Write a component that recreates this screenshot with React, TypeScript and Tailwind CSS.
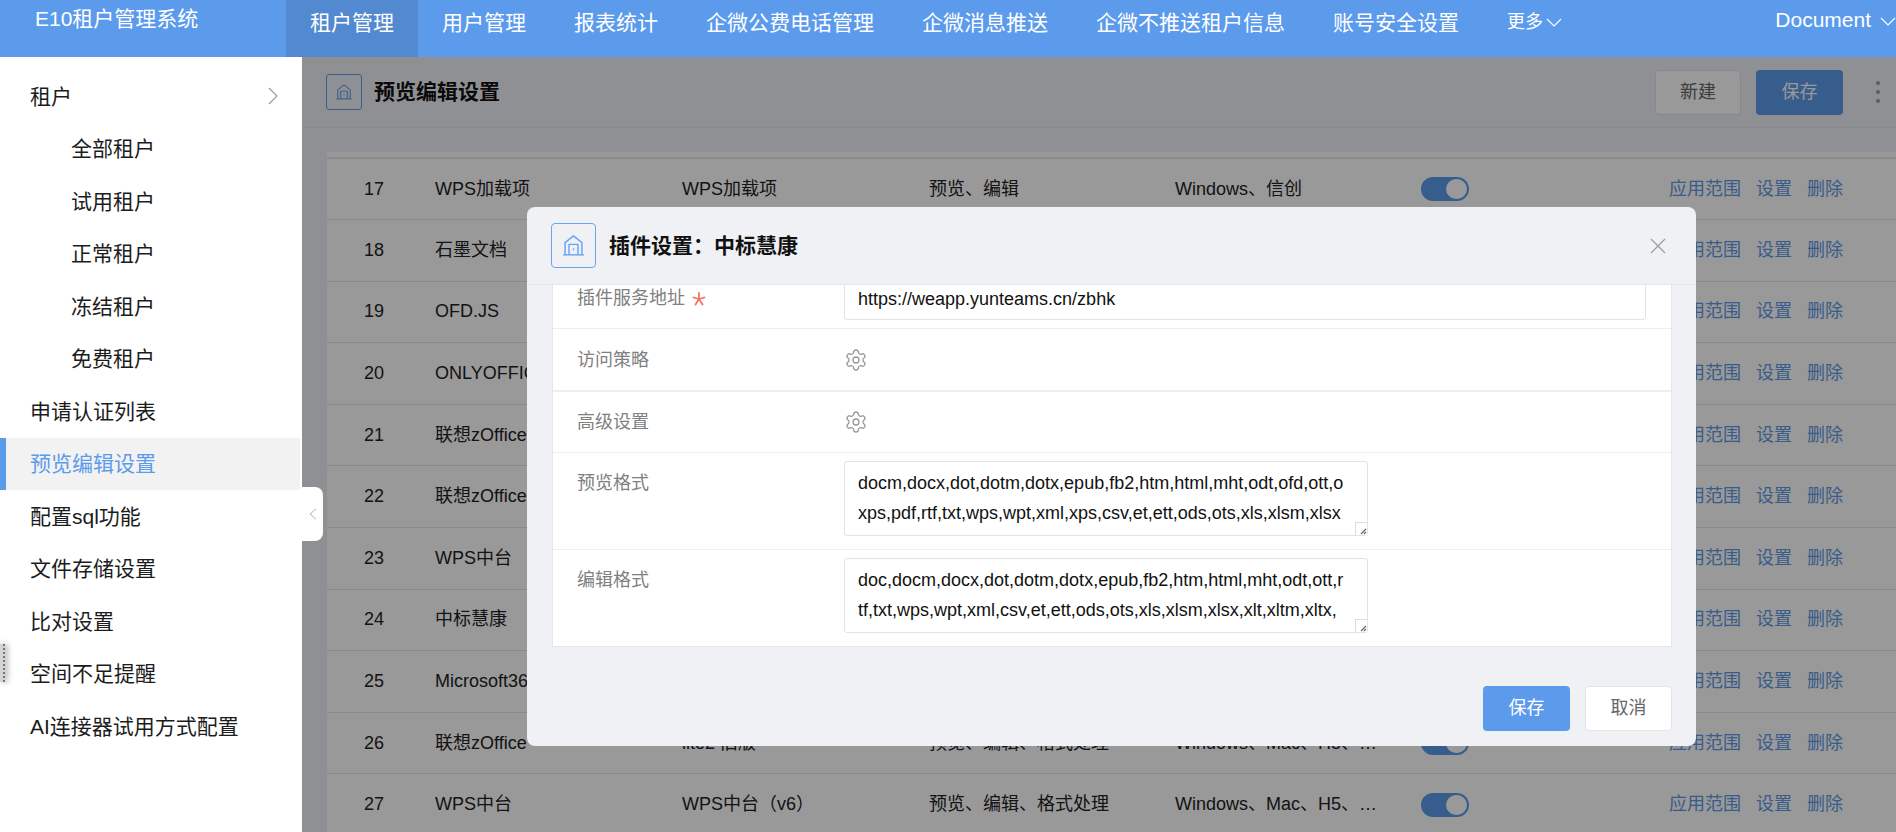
import React from "react";
import { Settings } from "lucide-react";

const navItems = ["租户管理", "用户管理", "报表统计", "企微公费电话管理", "企微消息推送", "企微不推送租户信息", "账号安全设置"];
const subItems = ["全部租户", "试用租户", "正常租户", "冻结租户", "免费租户"];
const topItems = ["申请认证列表", "预览编辑设置", "配置sql功能", "文件存储设置", "比对设置", "空间不足提醒", "AI连接器试用方式配置"];

const rows: [string, string, string, string, string][] = [
  ["18", "石墨文档", "石墨文档", "预览、编辑", "Windows、Mac、H5"],
  ["19", "OFD.JS", "OFD.JS", "预览", "Windows、信创"],
  ["20", "ONLYOFFICE", "ONLYOFFICE", "预览、编辑", "Windows、Mac、H5"],
  ["21", "联想zOffice", "联想zOffice", "预览、编辑", "Windows、Mac、H5"],
  ["22", "联想zOffice", "联想zOffice", "预览、编辑", "Windows、Mac、H5"],
  ["23", "WPS中台", "WPS中台", "预览、编辑", "Windows、Mac、H5"],
  ["24", "中标慧康", "中标慧康", "预览、编辑", "Windows、信创"],
  ["25", "Microsoft365", "Microsoft365", "预览、编辑", "Windows、Mac、H5"],
  ["26", "联想zOffice", "lite2 旧版", "预览、编辑、格式处理", "Windows、Mac、H5、…"],
  ["27", "WPS中台", "WPS中台（v6）", "预览、编辑、格式处理", "Windows、Mac、H5、…"],
];

function HouseIcon({ className }: { className: string }) {
  return (
    <svg viewBox="0 0 24 24" fill="none" stroke="currentColor" strokeWidth="1.3" strokeLinejoin="round" className={className}>
      <path d="M4.5 20V9.5L12 3.5l7.5 6V20" />
      <path d="M8 20v-9h8v9" />
      <path d="M2.8 20.3h18.4" />
      <path d="M12 14.5v1.8" />
    </svg>
  );
}

function Chevron({ dir, className }: { dir: "down" | "right" | "left"; className: string }) {
  const d = dir === "down" ? "M1 1l7 7 7-7" : dir === "right" ? "M1 1l8 8-8 8" : "M8 1 1 7l7 6";
  const vb = dir === "down" ? "0 0 16 9" : dir === "right" ? "0 0 10 18" : "0 0 9 14";
  return (
    <svg viewBox={vb} fill="none" stroke="currentColor" strokeWidth="1.1" className={className}>
      <path d={d} />
    </svg>
  );
}

function Toggle() {
  return (
    <div className="flex h-[24px] w-[48px] items-center justify-end rounded-full bg-[#5c9bec] pr-[2px]">
      <div className="h-[20px] w-[21px] rounded-full bg-white" />
    </div>
  );
}

function Row({ cells, className }: { cells: [string, string, string, string, string]; className: string }) {
  return (
    <div className={`grid grid-cols-[71px_247px_247px_246px_246px_248px_1fr] items-center border-b border-[#e4e4e4] pl-[37px] text-[18px] text-[#222] ${className}`}>
      <div>{cells[0]}</div>
      <div className="whitespace-nowrap">{cells[1]}</div>
      <div className="whitespace-nowrap">{cells[2]}</div>
      <div className="whitespace-nowrap">{cells[3]}</div>
      <div className="whitespace-nowrap">{cells[4]}</div>
      <div><Toggle /></div>
      <div className="flex gap-[15px] text-[#6199e6]">
        <span>应用范围</span>
        <span>设置</span>
        <span>删除</span>
      </div>
    </div>
  );
}

function Grip() {
  return (
    <div className="absolute bottom-[1px] right-[1px] flex h-[13px] w-[12px] items-end justify-end border-l border-t border-[#dcdcdc] bg-white">
      <svg viewBox="0 0 8 8" className="h-[8px] w-[8px]" stroke="#666" strokeWidth="1.2">
        <path d="M7 2 2 7M7 5 5 7" />
      </svg>
    </div>
  );
}

function FormatField({ value }: { value: string }) {
  return (
    <div className="relative h-[75px] w-[524px]">
      <textarea
        readOnly
        value={value}
        className="h-full w-full resize-none overflow-hidden break-all rounded-[3px] border border-[#e3e3e3] bg-white pb-0 pl-[13px] pr-[22px] pt-[6px] text-[18px] leading-[30px] text-[#111] outline-none"
      />
      <Grip />
    </div>
  );
}

export default function App() {
  return (
    <div lang="zh-CN" className="relative flex h-[832px] w-[1896px] flex-col overflow-hidden bg-white [font-family:Liberation_Sans,Noto_Sans_CJK_SC,sans-serif]">
      {/* top bar */}
      <header className="flex h-[57px] shrink-0 bg-[#5c9bec] text-white">
        <div className="w-[286px] shrink-0 pl-[35px] pt-[6px] text-[21px] leading-[26px]">E10租户管理系统</div>
        <nav className="flex h-full">
          {navItems.map((n, i) => (
            <div key={n} className={`flex h-full items-start whitespace-nowrap px-[24px] pt-[10px] text-[21px] leading-[26px] ${i === 0 ? "bg-[#5289d0]" : ""}`}>
              {n}
            </div>
          ))}
        </nav>
        <div className="ml-[24px] flex items-start pt-[9px] text-[18px] leading-[26px]">
          更多
          <Chevron dir="down" className="ml-[3px] mt-[9px] h-[9px] w-[16px]" />
        </div>
        <div className="ml-auto flex items-start pt-[7px] text-[21px] leading-[26px]">
          Document
          <Chevron dir="down" className="ml-[9px] mt-[10px] h-[9px] w-[16px]" />
        </div>
      </header>

      <div className="flex min-h-0 flex-1">
        {/* sidebar */}
        <aside className="w-[302px] shrink-0 bg-white pr-[2px] pt-[13px] text-[21px] text-[#1c1c1c]">
          <div className="flex h-[52.5px] items-center justify-between pl-[30px] pr-[22px]">
            <span>租户</span>
            <Chevron dir="right" className="h-[18px] w-[10px] text-[#9a9a9a]" />
          </div>
          {subItems.map((s) => (
            <div key={s} className="flex h-[52.5px] items-center pl-[71px]">{s}</div>
          ))}
          {topItems.map((s) => {
            const active = s === "预览编辑设置";
            return (
              <div
                key={s}
                className={`flex h-[52.5px] items-center ${active ? "border-l-[6px] border-[#5c9bec] bg-[#f2f2f2] pl-[24px] text-[#5c9bec]" : "pl-[30px]"}`}
              >
                {s}
              </div>
            );
          })}
        </aside>

        {/* main */}
        <main className="relative min-w-0 flex-1 overflow-hidden bg-[#eff1f5]">
          <div className="flex h-[71px] items-center border-b border-[#e6e7ea] pl-[24px] pr-[16px]">
            <div className="flex h-[36px] w-[36px] items-center justify-center rounded-[3px] border border-[#5c9bec] text-[#5c9bec]">
              <HouseIcon className="h-[20px] w-[20px]" />
            </div>
            <div className="ml-[12px] text-[21px] font-bold text-[#111]">预览编辑设置</div>
            <div className="ml-auto flex h-[45px] w-[86px] items-center justify-center rounded-[4px] border border-[#e3e3e3] bg-white text-[18px] text-[#666]">新建</div>
            <div className="ml-[15px] flex h-[45px] w-[87px] items-center justify-center rounded-[4px] bg-[#5c9bec] text-[18px] text-white">保存</div>
            <div className="ml-[33px] flex w-[4px] flex-col gap-[5px]">
              <span className="h-[4px] w-[4px] rounded-full bg-[#9a9a9a]" />
              <span className="h-[4px] w-[4px] rounded-full bg-[#9a9a9a]" />
              <span className="h-[4px] w-[4px] rounded-full bg-[#9a9a9a]" />
            </div>
          </div>

          <div className="ml-[25px] mt-[24px] bg-white">
            <div className="h-[5px]" />
            <div className="h-[2px] bg-[#e8e8e8]" />
            <Row cells={["17", "WPS加载项", "WPS加载项", "预览、编辑", "Windows、信创"]} className="h-[61px]" />
            {rows.map((r) => (
              <Row key={r[0]} cells={r} className="h-[61.6px]" />
            ))}
          </div>

          {/* backdrop */}
          <div className="absolute inset-0 bg-black/40" />
        </main>
      </div>

      {/* collapse handle */}
      <div className="absolute left-[302px] top-[487px] flex h-[54px] w-[21px] items-center justify-center rounded-r-[8px] bg-white">
        <Chevron dir="left" className="h-[12px] w-[8px] text-[#aaa]" />
      </div>

      {/* stray edge widget */}
      <div className="absolute left-0 top-[644px] h-[38px] w-[5px] border-r-2 border-dotted border-[#777] bg-[#d4d4d4] shadow-[2px_0_6px_rgba(0,0,0,0.35)]" />

      {/* modal */}
      <div className="absolute left-[527px] top-[207px] flex h-[539px] w-[1169px] flex-col rounded-[8px] bg-[#eff1f5]">
        <div className="flex h-[78px] shrink-0 items-center border-b border-[#e4e6ea] pl-[24px] pr-[30px]">
          <div className="flex h-[45px] w-[45px] items-center justify-center rounded-[4px] border border-[#6aa5f5] text-[#6aa5f5]">
            <HouseIcon className="h-[27px] w-[27px]" />
          </div>
          <div className="ml-[13px] text-[21px] font-bold text-[#111]">插件设置：中标慧康</div>
          <svg viewBox="0 0 16 16" fill="none" stroke="#999" strokeWidth="1.1" className="ml-auto h-[16px] w-[16px]">
            <path d="M1 1l14 14M15 1 1 15" />
          </svg>
        </div>

        <div className="ml-[25px] w-[1120px] border-x border-b border-[#e4e6ea] bg-white text-[18px] text-[#808080]">
          <div className="flex h-[44px] items-end overflow-hidden border-b border-[#eeeeee] pb-[8px] pl-[24px] pr-[25px]">
            <div className="flex h-[40px] w-[267px] shrink-0 items-center pb-[3px]">
              插件服务地址
              <svg viewBox="0 0 14 14" className="ml-[7px] h-[14px] w-[14px]" stroke="#f4735c" strokeWidth="1.8" strokeLinecap="round">
                <path d="M7 1v6M7 7 1.5 5.5M7 7l5.5-1.5M7 7 3.5 12.5M7 7l3.5 5.5" />
              </svg>
            </div>
            <div className="flex h-[40px] flex-1 items-center rounded-[3px] border border-[#e3e3e3] bg-white pb-[1px] pl-[13px] text-[18px] text-[#111]">
              https://weapp.yunteams.cn/zbhk
            </div>
          </div>
          <div className="flex h-[63px] items-center border-b-2 border-[#eeeeee] pl-[24px]">
            <div className="w-[267px] shrink-0 pt-[1px]">访问策略</div>
            <Settings className="h-[24px] w-[24px] text-[#999]" strokeWidth={1.3} />
          </div>
          <div className="flex h-[61px] items-center border-b border-[#eeeeee] pl-[24px]">
            <div className="w-[267px] shrink-0">高级设置</div>
            <Settings className="h-[24px] w-[24px] text-[#999]" strokeWidth={1.3} />
          </div>
          <div className="flex h-[97px] border-b border-[#eeeeee] pl-[24px] pt-[8px]">
            <div className="w-[267px] shrink-0 pt-[7px] leading-[30px]">预览格式</div>
            <FormatField value="docm,docx,dot,dotm,dotx,epub,fb2,htm,html,mht,odt,ofd,ott,oxps,pdf,rtf,txt,wps,wpt,xml,xps,csv,et,ett,ods,ots,xls,xlsm,xlsx" />
          </div>
          <div className="flex h-[96px] pl-[24px] pt-[8px]">
            <div className="w-[267px] shrink-0 pt-[7px] leading-[30px]">编辑格式</div>
            <FormatField value="doc,docm,docx,dot,dotm,dotx,epub,fb2,htm,html,mht,odt,ott,rtf,txt,wps,wpt,xml,csv,et,ett,ods,ots,xls,xlsm,xlsx,xlt,xltm,xltx," />
          </div>
        </div>

        <div className="mt-[39px] flex justify-end gap-[15px] pr-[24px] text-[18px]">
          <div className="flex h-[45px] w-[87px] items-center justify-center rounded-[4px] bg-[#5c9bec] text-white">保存</div>
          <div className="flex h-[45px] w-[87px] items-center justify-center rounded-[4px] border border-[#e5e5e5] bg-white text-[#666]">取消</div>
        </div>
      </div>
    </div>
  );
}
